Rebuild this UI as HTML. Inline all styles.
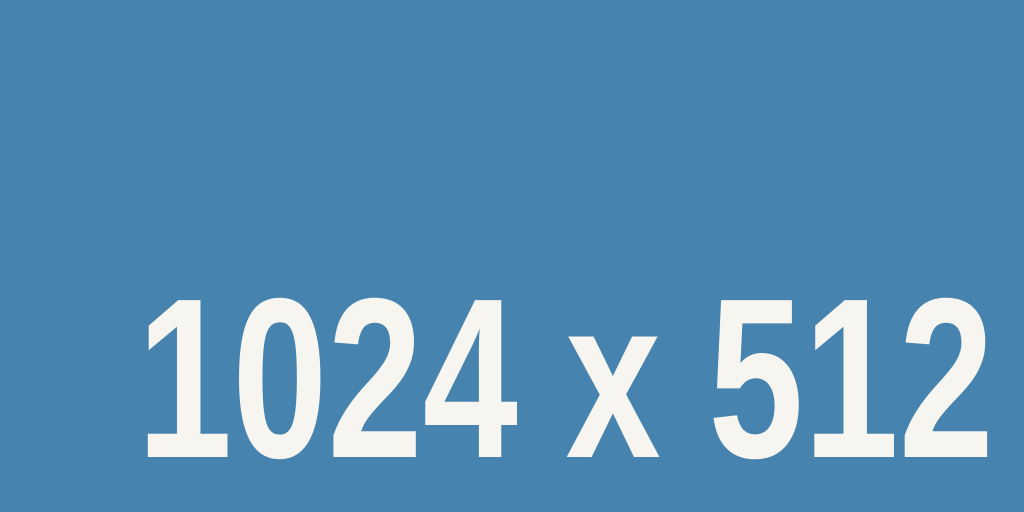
<!DOCTYPE html>
<html><head><meta charset="utf-8"><style>
html,body{margin:0;padding:0;width:1024px;height:512px;overflow:hidden;}
body{background:#4683ae;position:relative;}
.t{position:absolute;left:137px;top:379px;font-family:"Liberation Sans",sans-serif;font-weight:bold;font-size:228px;line-height:0;color:#f6f5ef;white-space:pre;transform-origin:0 0;transform:scaleX(0.751);}
</style></head><body>
<div class="t">1024 x 512</div>
</body></html>
